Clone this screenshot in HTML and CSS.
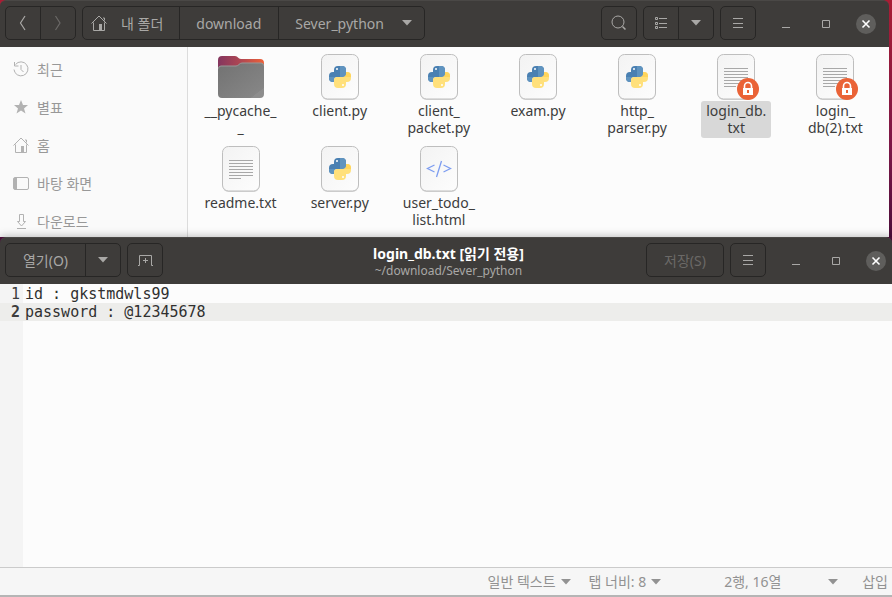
FILE: index.html
```html
<!DOCTYPE html>
<html lang="ko">
<head>
<meta charset="utf-8">
<meta name="viewport" content="width=device-width, initial-scale=1">
<title>login_db.txt</title>
<link rel="stylesheet" href="styles.css">
</head>
<body>
<svg class="sprite" aria-hidden="true">
  <defs>
    <linearGradient id="paper" x1="0" y1="0" x2="1" y2="1">
      <stop offset="0" stop-color="#f3f3f3"/><stop offset="1" stop-color="#fdfdfd"/>
    </linearGradient>
    <linearGradient id="folder-back" x1="0" y1="0" x2="1" y2="0">
      <stop offset="0" stop-color="#84365f"/><stop offset=".5" stop-color="#b04752"/><stop offset="1" stop-color="#ee6138"/>
    </linearGradient>
    <linearGradient id="folder-front" x1="0" y1="0" x2="1" y2="1">
      <stop offset="0" stop-color="#727272"/><stop offset=".85" stop-color="#858585"/><stop offset=".86" stop-color="#8d8d8d"/><stop offset="1" stop-color="#8d8d8d"/>
    </linearGradient>
  </defs>
  <symbol id="home" viewBox="0 0 16 16">
    <path d="M.5 8.500 8 1l7.500 7.500M2.500 7.500v8h11v-8M13.500 5.500V3H12" fill="none" stroke="currentColor"/>
    <path d="M8 9h3v6H8z" fill="currentColor"/>
  </symbol>
  <symbol id="lines" viewBox="0 0 16 16"><path d="M3 3.500h10M3 8.500h10M3 12.500h10" fill="none" stroke="currentColor"/></symbol>
  <symbol id="down" viewBox="0 0 10 6"><path d="M0 0h10L5 5.500z" fill="currentColor"/></symbol>
  <symbol id="minimize" viewBox="0 0 10 10"><path d="M1 8.500h8" stroke="currentColor"/></symbol>
  <symbol id="maximize" viewBox="0 0 10 10"><path d="M1.500 1.500h7v7h-7z" fill="none" stroke="currentColor"/></symbol>
  <symbol id="close" viewBox="0 0 10 10"><path d="M1.500 1.500l7 7M8.500 1.500l-7 7" stroke="currentColor" stroke-width="1.600"/></symbol>
  <symbol id="sheet" viewBox="0 0 38 46">
    <rect x=".5" y="1" width="37" height="45" rx="6" fill="#d9d9d9"/>
    <rect x=".5" y=".5" width="37" height="44.500" rx="6" fill="url(#paper)" stroke="#bebebe"/>
  </symbol>
  <symbol id="snake" viewBox="0 0 22 22">
    <path d="M5 4a4 4 0 0 1 4-4h4a4 4 0 0 1 4 4v4a3 3 0 0 1-3 3H8a3 3 0 0 0-3 3v2H4a4 4 0 0 1-4-4v-2a4 4 0 0 1 4-4h1z" fill="#4a80b2"/>
    <path d="M11 0h2a4 4 0 0 1 4 4v4a3 3 0 0 1-3 3h-3zM0 11h11H8a3 3 0 0 0-3 3v2H4a4 4 0 0 1-4-4z" fill="#5f93bf"/>
    <path d="M17 18a4 4 0 0 1-4 4H9a4 4 0 0 1-4-4v-4a3 3 0 0 1 3-3h6a3 3 0 0 0 3-3V6h1a4 4 0 0 1 4 4v2a4 4 0 0 1-4 4h-1z" fill="#ffe07b"/>
    <path d="M17 6h1a4 4 0 0 1 4 4v1h-8a3 3 0 0 0 3-3z" fill="#ffd55c"/>
    <circle cx="8" cy="3" r="1" fill="#fff"/><circle cx="14" cy="19" r="1" fill="#fff"/>
  </symbol>
  <symbol id="python" viewBox="0 0 38 46"><use href="#sheet"/><use href="#snake" x="8" y="12" width="22" height="22"/></symbol>
  <symbol id="text" viewBox="0 0 38 46"><use href="#sheet"/>
    <path d="M7 14.500h24M7 17.500h24M7 20.500h24M7 23.500h24M7 26.500h24M7 29.500h24M7 32.500h12" stroke="#a8a8a8"/></symbol>
  <symbol id="markup" viewBox="0 0 38 46"><use href="#sheet"/>
    <path d="M14.500 19 7.500 22.500l7 3.500M21.500 15l-5 16M23.500 19l7 3.500-7 3.500" fill="none" stroke="#7d9df0" stroke-width="1.300"/></symbol>
  <symbol id="lock" viewBox="0 0 22 22">
    <circle cx="11" cy="11" r="11" fill="#ea6337"/>
    <path d="M7.500 10V8a3.500 3.500 0 0 1 7 0v2" fill="none" stroke="#fff" stroke-width="1.600"/>
    <path d="M6 10h10v7H6z" fill="#fff"/><path d="M10 12h2v3h-2z" fill="#ea6337"/>
  </symbol>
</svg>

<section class="window files" aria-label="파일">
  <header class="titlebar">
    <div class="tools">
      <div class="linked">
        <button class="btn square" aria-label="뒤로"><svg class="i16" viewBox="0 0 16 16"><path d="M10 1 5.500 8l4.500 7" fill="none" stroke="currentColor" stroke-width="1.200"/></svg></button>
        <button class="btn square" aria-label="앞으로" disabled><svg class="i16" viewBox="0 0 16 16"><path d="M5.500 1 10 8l-4.500 7" fill="none" stroke="currentColor" stroke-width="1.200"/></svg></button>
      </div>
      <nav class="linked" aria-label="경로">
        <button class="btn crumb home"><svg class="i16"><use href="#home"/></svg>내 폴더</button>
        <button class="btn crumb">download</button>
        <button class="btn crumb">Sever_python<svg class="caret"><use href="#down"/></svg></button>
      </nav>
    </div>
    <div class="tools end">
      <button class="btn square" aria-label="검색"><svg class="i16" viewBox="0 0 16 16"><circle cx="7" cy="7" r="6" fill="none" stroke="currentColor"/><path d="M11.500 11.500l3 3" stroke="currentColor" stroke-width="1.500"/></svg></button>
      <div class="linked">
        <button class="btn square" aria-label="목록 보기"><svg class="i16" viewBox="0 0 16 16"><path d="M2.500 2.500h2v2h-2zM2.500 7.500h2v2h-2zM2.500 11.500h2v2h-2zM6 3.500h8M6 8.500h8M6 12.500h8" fill="none" stroke="currentColor"/></svg></button>
        <button class="btn square" aria-label="보기 옵션"><svg class="caret"><use href="#down"/></svg></button>
      </div>
      <button class="btn square" aria-label="메뉴"><svg class="i16"><use href="#lines"/></svg></button>
      <div class="controls">
        <button aria-label="최소화"><svg><use href="#minimize"/></svg></button>
        <button aria-label="최대화"><svg><use href="#maximize"/></svg></button>
        <button class="close" aria-label="닫기"><svg><use href="#close"/></svg></button>
      </div>
    </div>
  </header>
  <div class="browser">
    <nav class="places" aria-label="위치">
      <a href="#"><svg class="i16" viewBox="0 0 16 16"><path d="M2.500 3.500A7 7 0 1 1 1 8.500M8 4v4.500l2.500 2.500M1.500 1v4h4" fill="none" stroke="currentColor"/></svg>최근</a>
      <a href="#"><svg class="i16" viewBox="0 0 16 16"><path d="M8 1l2 5h5l-4 3.500 1.500 5L8 11.500l-4.500 3 1.500-5L1 6h5z" fill="currentColor"/></svg>별표</a>
      <a href="#"><svg class="i16"><use href="#home"/></svg>홈</a>
      <a href="#"><svg class="i16" viewBox="0 0 16 16"><rect x=".5" y="2.500" width="15" height="12" rx="1.500" fill="none" stroke="currentColor"/><path d="M1 3h3v11H1z" fill="currentColor"/></svg>바탕 화면</a>
      <a href="#"><svg class="i16" viewBox="0 0 16 16"><path d="M6.500 1.500h4v7h2l-4 4.500-4-4.500h2zM4 15.500h9" fill="none" stroke="currentColor"/></svg>다운로드</a>
    </nav>
    <ul class="icons">
      <li><svg class="folder" viewBox="0 0 46 46"><path d="M0 6a4 4 0 0 1 4-4h13c3 0 3 3 6 3h19a4 4 0 0 1 4 4v20H0z" fill="url(#folder-back)"/><path d="M0 15a3 3 0 0 1 3-3h15c3 0 3-3 6-3h19a3 3 0 0 1 3 3v28a4 4 0 0 1-4 4H4a4 4 0 0 1-4-4z" fill="url(#folder-front)"/><path d="M.500 14.500a2.500 2.500 0 0 1 2.500-2.500h15c3 0 3-3 6-3h19a2.500 2.500 0 0 1 2.500 2.500" fill="none" stroke="#989898"/></svg><span class="name">__pycache_<br>_</span></li>
      <li><svg><use href="#python"/></svg><span class="name">client.py</span></li>
      <li><svg><use href="#python"/></svg><span class="name">client_<br>packet.py</span></li>
      <li><svg><use href="#python"/></svg><span class="name">exam.py</span></li>
      <li><svg><use href="#python"/></svg><span class="name">http_<br>parser.py</span></li>
      <li><span class="locked"><svg><use href="#text"/></svg><svg class="badge"><use href="#lock"/></svg></span><span class="name selected">login_db.<br>txt</span></li>
      <li><span class="locked"><svg><use href="#text"/></svg><svg class="badge"><use href="#lock"/></svg></span><span class="name">login_<br>db(2).txt</span></li>
      <li><svg><use href="#text"/></svg><span class="name">readme.txt</span></li>
      <li><svg><use href="#python"/></svg><span class="name">server.py</span></li>
      <li><svg><use href="#markup"/></svg><span class="name">user_todo_<br>list.html</span></li>
    </ul>
  </div>
</section>

<section class="window editor" aria-label="텍스트 편집기">
  <header class="titlebar">
    <div class="tools">
      <div class="linked">
        <button class="btn open">열기(O)</button>
        <button class="btn square" aria-label="최근 문서"><svg class="caret"><use href="#down"/></svg></button>
      </div>
      <button class="btn square" aria-label="새 탭"><svg class="i16" viewBox="0 0 16 16"><path d="M1 13.500h1.500v-10h12v10H16M8.500 6v5M6 8.500h5" fill="none" stroke="currentColor"/></svg></button>
    </div>
    <div class="title">
      <h1>login_db.txt [읽기 전용]</h1>
      <p>~/download/Sever_python</p>
    </div>
    <div class="tools end">
      <button class="btn save" disabled>저장(S)</button>
      <button class="btn square" aria-label="메뉴"><svg class="i16"><use href="#lines"/></svg></button>
      <div class="controls">
        <button aria-label="최소화"><svg><use href="#minimize"/></svg></button>
        <button aria-label="최대화"><svg><use href="#maximize"/></svg></button>
        <button class="close" aria-label="닫기"><svg><use href="#close"/></svg></button>
      </div>
    </div>
  </header>
  <div class="document">
    <div class="gutter" aria-hidden="true"><span>1</span><span class="current">2</span></div>
    <textarea aria-label="문서 내용" readonly spellcheck="false">id : gkstmdwls99
password : @12345678</textarea>
  </div>
  <footer class="status">
    <button>일반 텍스트<svg class="caret"><use href="#down"/></svg></button>
    <button>탭 너비: 8<svg class="caret"><use href="#down"/></svg></button>
    <button class="position">2행, 16열<svg class="caret"><use href="#down"/></svg></button>
    <span>삽입</span>
  </footer>
</section>
</body>
</html>
```

FILE: styles.css
```css
* { box-sizing: border-box; }

body {
  margin: 0;
  min-height: 100vh;
  display: flex;
  flex-direction: column;
  background: linear-gradient(#a91d34, #7b1747 25%, #3a0a35 45%, #300a24);
  color: #3d3d3d;
  font: 14px/17px "Noto Sans", "Noto Sans CJK KR", sans-serif;
}

button {
  margin: 0;
  padding: 0;
  border: 0;
  background: none;
  color: inherit;
  font: inherit;
}

svg { display: block; flex: none; }
.sprite { position: absolute; width: 0; height: 0; }
.i16 { width: 16px; height: 16px; }
.caret { width: 10px; height: 6px; }

.window { display: flex; flex-direction: column; }

.titlebar {
  display: flex;
  justify-content: space-between;
  align-items: center;
  height: 47px;
  padding: 0 6px 2px 5px;
  border-top: 1px solid #4a4846;
  border-radius: 6px 6px 0 0;
  background: #3e3c3a;
  color: #a9a8a6;
}

.tools { display: flex; align-items: center; gap: 6px; }
.end { justify-content: flex-end; }
.linked { display: flex; }

.btn {
  display: flex;
  align-items: center;
  justify-content: center;
  height: 34px;
  border: 1px solid #272625;
  border-radius: 5px;
  white-space: nowrap;
}
.btn:disabled { color: #6b6967; }
.linked .btn:not(:first-child) { margin-left: -1px; border-top-left-radius: 0; border-bottom-left-radius: 0; }
.linked .btn:not(:last-child) { border-top-right-radius: 0; border-bottom-right-radius: 0; }
.square { width: 36px; }
.crumb { gap: 18px; padding: 0 12px 0 16px; }
.crumb:nth-child(2) { padding: 0 17px 0 16px; }
.home { gap: 14px; padding: 0 16px 0 8px; }
.open { width: 81px; }
.save { width: 78px; }

.controls { display: flex; gap: 20px; padding: 1px 0 0 14px; }
.controls button { display: grid; place-items: center; width: 20px; height: 20px; border-radius: 50%; }
.controls svg { width: 10px; height: 10px; }
.controls .close { background: #5f5e5c; color: #fff; }

.files { height: 237px; margin-right: 3px; }
.files .titlebar { padding-right: 13px; }
.browser { display: flex; flex: 1; min-height: 0; background: #fcfcfc; }

.places {
  flex: none;
  width: 188px;
  padding-top: 3px;
  border-right: 1px solid #dcdcdc;
  background: #fafafa;
  overflow: hidden;
}
.places a {
  display: flex;
  align-items: center;
  gap: 8px;
  height: 38px;
  padding-left: 13px;
  color: #989898;
  text-decoration: none;
}
.places svg { color: #b2b2b2; }

.icons {
  flex: 1;
  display: grid;
  grid-template-columns: repeat(7, 1fr);
  grid-auto-rows: 92px;
  margin: 0;
  padding: 7px 4px 0 3px;
  list-style: none;
}
.icons li { display: flex; flex-direction: column; align-items: center; }
.icons svg { width: 38px; height: 46px; }
.icons .folder { width: 46px; }
.name { margin-top: 1px; padding: 1px 5px 2px; border-radius: 3px; text-align: center; }
.selected { background: #d8d8d8; }
.locked { position: relative; }
.icons .badge { position: absolute; right: -4px; bottom: 0; width: 22px; height: 22px; }

.editor { flex: 1; border-bottom: 2px solid #b5b5b5; box-shadow: 0 -1px 8px rgba(0, 0, 0, .25); }
.editor .titlebar { display: grid; grid-template-columns: 1fr auto 1fr; }
.title { padding: 3px 0 0 6px; text-align: center; }
.title h1 { margin: 0; color: #fff; font-size: 14px; line-height: 19px; }
.title p { margin: 0; font-size: 12px; line-height: 16px; }

.document {
  flex: 1;
  display: flex;
  font: 15px/18px "DejaVu Sans Mono", "Noto Sans CJK KR", monospace;
}
.gutter {
  display: flex;
  flex-direction: column;
  width: 23px;
  padding-top: 1px;
  background: #f4f4f4;
  text-align: right;
}
.gutter span { padding-right: 3px; }
.gutter .current { background: #ededeb; font-weight: bold; }
textarea {
  flex: 1;
  min-width: 0;
  padding: 1px 2px;
  border: 0;
  outline: 0;
  resize: none;
  background: linear-gradient(#ededeb, #ededeb) 0 19px / 100% 18px no-repeat #fcfcfc;
  color: #303030;
  font: inherit;
}

.status {
  display: flex;
  align-items: center;
  justify-content: flex-end;
  gap: 18px;
  height: 28px;
  padding-right: 4px;
  border-top: 1px solid #cbcbcb;
  background: #f6f6f6;
  color: #929292;
}
.status button { display: flex; align-items: center; gap: 5px; }
.status .position { justify-content: space-between; width: 114px; margin: 0 6px 0 45px; }
```
